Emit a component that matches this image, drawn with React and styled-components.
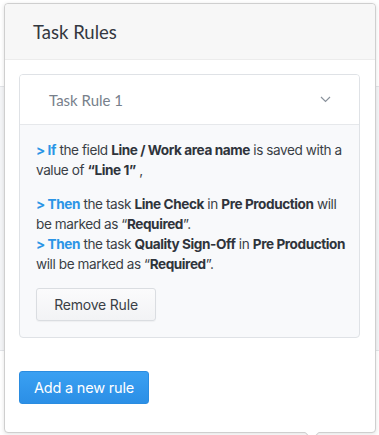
import React from "react";
import styled, { createGlobalStyle } from "styled-components";

const Global = createGlobalStyle`
  html, body { margin: 0; padding: 0; background: #fff; }
  body { font-family: "Lato", "Liberation Sans", sans-serif; }
  * { box-sizing: border-box; }
`;

const Page = styled.div`
  position: relative;
  width: 379px;
  height: 435px;
  overflow: hidden;
  background: #fff;
`;

const Backdrop = styled.div`
  padding-top: 86px;
`;

const BackRow = styled.div`
  height: ${(p) => p.h}px;
  background: #f4f5f7;
  border-top: 1px solid #e2e4e8;
  border-bottom: 1px solid #e2e4e8;
`;

const Popover = styled.div`
  position: absolute;
  left: 4px;
  top: 3px;
  width: 372px;
  height: 430px;
  background: #fff;
  border: 1px solid #cfcfcf;
  border-radius: 4px;
  box-shadow: 0 1px 4px rgba(0, 0, 0, 0.12);
  display: flex;
  flex-direction: column;
`;

const Caret = styled.div`
  position: absolute;
  left: 302px;
  bottom: -6px;
  width: 10px;
  height: 10px;
  background: #fff;
  border-right: 1px solid #cfcfcf;
  border-bottom: 1px solid #cfcfcf;
  transform: rotate(45deg);
`;

const Header = styled.div`
  height: 56px;
  background: #f7f7f7;
  border-bottom: 1px solid #ececec;
  border-radius: 4px 4px 0 0;
  display: flex;
  align-items: center;
  padding-left: 28px;
  font-family: "Lato", sans-serif;
  font-size: 18.5px;
  color: #333840;
`;

const Body = styled.div`
  padding: 14px 15px 0 14px;
  display: flex;
  flex-direction: column;
`;

const RuleCard = styled.div`
  border: 1px solid #dfe2e6;
  border-radius: 4px;
  background: #f8f9fb;
  overflow: hidden;
`;

const RuleHead = styled.div`
  height: 50px;
  background: #fff;
  border-bottom: 1px solid #e6e8eb;
  display: flex;
  align-items: center;
  justify-content: space-between;
  padding: 0 28px 0 29px;
  font-family: "Lato", sans-serif;
  font-size: 15px;
  color: #77808b;
`;

const RuleBody = styled.div`
  padding: 15px 10px 16px 16px;
  font-family: "Inter", "Open Sans", sans-serif;
  font-size: 13.6px;
  line-height: 20px;
  color: #3a3f46;
  letter-spacing: -0.42px;
  white-space: nowrap;
`;

const Para = styled.p`
  margin: 0 0 ${(p) => p.gap || 0}px 0;
`;

const Kw = styled.b`
  color: #2b95e6;
  font-weight: 700;
`;

const B = styled.b`
  font-weight: 700;
  color: #2f343b;
`;

const GhostButton = styled.button`
  display: block;
  margin-top: 14px;
  width: 120px;
  height: 33px;
  border: 1px solid #dadde1;
  border-radius: 3px;
  background: linear-gradient(#fbfbfc, #f2f3f5);
  box-shadow: 0 1px 1px rgba(0, 0, 0, 0.04);
  font-family: "Inter", "Open Sans", sans-serif;
  font-size: 14px;
  letter-spacing: -0.2px;
  color: #3a3f46;
  padding: 0;
`;

const Footer = styled.div`
  padding: 33px 14px 0 14px;
`;

const PrimaryButton = styled.button`
  width: 130px;
  height: 33px;
  border: 1px solid #2a8ce0;
  border-radius: 3px;
  background: linear-gradient(#3aa0f2, #2b8fe6);
  color: #fff;
  font-family: "Inter", "Open Sans", sans-serif;
  font-size: 14.5px;
  letter-spacing: -0.2px;
  padding: 0;
`;

const Chevron = () => (
  <svg width="11" height="7" viewBox="0 0 11 7" fill="none">
    <path d="M1 1l4.5 4.5L10 1" stroke="#8a929c" strokeWidth="1.2" />
  </svg>
);

export default function App() {
  return (
    <>
      <Global />
      <Page>
        <Backdrop>
          <BackRow h={265} />
        </Backdrop>
        <Popover>
          <Header>Task Rules</Header>
          <Body>
            <RuleCard>
              <RuleHead>
                <span>Task Rule 1</span>
                <Chevron />
              </RuleHead>
              <RuleBody>
                <Para gap={14}>
                  <Kw>&gt; If</Kw> the field <B>Line / Work area name</B> is saved with a
                  <br />
                  value of <B>“Line 1”</B> ,
                </Para>
                <Para>
                  <Kw>&gt; Then</Kw> the task <B>Line Check</B> in <B>Pre Production</B> will
                  <br />
                  be marked as “<B>Required</B>”.
                </Para>
                <Para>
                  <Kw>&gt; Then</Kw> the task <B>Quality Sign-Off</B> in <B>Pre Production</B>
                  <br />
                  will be marked as “<B>Required</B>”.
                </Para>
                <GhostButton>Remove Rule</GhostButton>
              </RuleBody>
            </RuleCard>
          </Body>
          <Footer>
            <PrimaryButton>Add a new rule</PrimaryButton>
          </Footer>
          <Caret />
        </Popover>
      </Page>
    </>
  );
}
